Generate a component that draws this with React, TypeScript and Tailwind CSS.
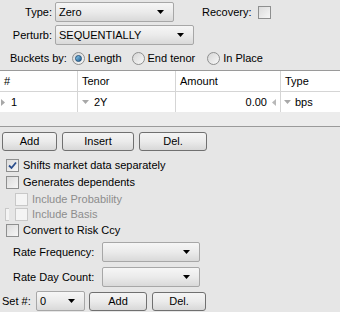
import React from "react";

const font = { fontFamily: '"Liberation Sans", Arial, sans-serif' };

function Arrow() {
  return (
    <svg width="7" height="4" viewBox="0 0 7 4" className="shrink-0">
      <path d="M0 0H7L3.5 4Z" fill="#000" />
    </svg>
  );
}

function Combo({ w, text }: { w: string; text?: string }) {
  return (
    <div
      className={`${w} h-[20px] flex items-center justify-between pl-[3px] pr-[9px] rounded-[2px] border border-[#a7a7a7] bg-gradient-to-b from-[#f6f6f6] via-[#ebebeb] to-[#d9d9d9] text-black`}
    >
      <span className="leading-none">{text}</span>
      <Arrow />
    </div>
  );
}

function Btn({ w, label }: { w: string; label: string }) {
  return (
    <div
      className={`${w} h-[19px] flex items-center justify-center rounded-[3px] border border-[#707070] bg-gradient-to-b from-[#f4f4f4] via-[#ebebeb] to-[#d8d8d8] text-black leading-none`}
    >
      {label}
    </div>
  );
}

function Check({ checked, disabled }: { checked?: boolean; disabled?: boolean }) {
  return (
    <div
      className={`w-[13px] h-[13px] shrink-0 flex items-center justify-center border ${
        disabled ? "border-[#c8c8c8] bg-[#f4f4f4]" : "border-[#8e8f8f] bg-gradient-to-br from-[#dcdcdc] to-[#f6f6f6]"
      }`}
    >
      {checked && (
        <svg width="9" height="9" viewBox="0 0 9 9">
          <path d="M1 4.5L3.5 7L8 1.5" stroke="#2b4e8c" strokeWidth="1.8" fill="none" />
        </svg>
      )}
    </div>
  );
}

function Radio({ checked }: { checked?: boolean }) {
  return (
    <div className="w-[13px] h-[13px] shrink-0 rounded-full border border-[#8e8f8f] bg-gradient-to-br from-[#d6d6d6] to-[#f8f8f8] flex items-center justify-center">
      {checked && (
        <div className="w-[7px] h-[7px] rounded-full bg-gradient-to-br from-[#8fd0f2] to-[#1c5a8e] border border-[#1f4f7a]" />
      )}
    </div>
  );
}

export default function App() {
  return (
    <div
      className="w-[340px] h-[312px] bg-[#e6e6e6] text-[11px] text-black overflow-hidden flex flex-col select-none"
      style={font}
    >
      {/* Row 1 */}
      <div className="flex items-center mt-[2px] h-[20px]">
        <div className="w-[52px] text-right">Type:</div>
        <div className="ml-[3px]">
          <Combo w="w-[119px]" text="Zero" />
        </div>
        <div className="ml-[28px]">Recovery:</div>
        <div className="ml-[6px]">
          <Check />
        </div>
      </div>
      {/* Row 2 */}
      <div className="flex items-center mt-[3px] h-[20px]">
        <div className="w-[52px] text-right">Perturb:</div>
        <div className="ml-[3px]">
          <Combo w="w-[139px]" text="SEQUENTIALLY" />
        </div>
      </div>
      {/* Row 3 */}
      <div className="flex items-center mt-[3px] h-[20px] pl-[10px]">
        <span>Buckets by:</span>
        <div className="ml-[5px]">
          <Radio checked />
        </div>
        <span className="ml-[3px]">Length</span>
        <div className="ml-[10px]">
          <Radio />
        </div>
        <span className="ml-[3px]">End tenor</span>
        <div className="ml-[12px]">
          <Radio />
        </div>
        <span className="ml-[3px]">In Place</span>
      </div>
      {/* Table */}
      <div className="mt-[2px] border-t border-b border-[#9a9a9a] bg-[#ececec] h-[57px] flex flex-col">
        <div className="flex h-[21px] bg-white border-b border-[#d5d5d5]">
          <div className="w-[78px] border-r border-[#d5d5d5] pl-[4px] flex items-center">#</div>
          <div className="w-[98px] border-r border-[#d5d5d5] pl-[4px] flex items-center">Tenor</div>
          <div className="w-[105px] border-r border-[#d5d5d5] pl-[4px] flex items-center">Amount</div>
          <div className="flex-1 pl-[4px] flex items-center">Type</div>
        </div>
        <div className="flex h-[20px] bg-white">
          <div className="w-[78px] border-r border-[#d5d5d5] pl-[1px] flex items-center">
            <svg width="4" height="7" viewBox="0 0 4 7">
              <path d="M0 0L4 3.5L0 7Z" fill="#a8a8a8" />
            </svg>
            <span className="ml-[6px]">1</span>
          </div>
          <div className="w-[98px] border-r border-[#d5d5d5] pl-[4px] flex items-center">
            <svg width="7" height="4" viewBox="0 0 7 4">
              <path d="M0 0H7L3.5 4Z" fill="#a8a8a8" />
            </svg>
            <span className="ml-[5px]">2Y</span>
          </div>
          <div className="w-[105px] border-r border-[#d5d5d5] flex items-center justify-end pr-[4px]">
            <span>0.00</span>
            <svg width="4" height="7" viewBox="0 0 4 7" className="ml-[5px]">
              <path d="M4 0L0 3.5L4 7Z" fill="#b8b8b8" />
            </svg>
          </div>
          <div className="flex-1 pl-[3px] flex items-center">
            <svg width="7" height="4" viewBox="0 0 7 4">
              <path d="M0 0H7L3.5 4Z" fill="#a8a8a8" />
            </svg>
            <span className="ml-[4px]">bps</span>
          </div>
        </div>
      </div>
      {/* Buttons */}
      <div className="flex mt-[5px] pl-[2px] gap-[5px]">
        <Btn w="w-[55px]" label="Add" />
        <Btn w="w-[72px]" label="Insert" />
        <Btn w="w-[68px]" label="Del." />
      </div>
      {/* Checkboxes */}
      <div className="flex items-center h-[18px] mt-[5px] pl-[6px]">
        <Check checked />
        <span className="ml-[4px]">Shifts market data separately</span>
      </div>
      <div className="flex items-center h-[17px] pl-[6px]">
        <Check />
        <span className="ml-[4px]">Generates dependents</span>
      </div>
      <div className="flex items-center h-[16px] pl-[15px]">
        <Check disabled />
        <span className="ml-[4px] text-[#8d8d8d]">Include Probability</span>
      </div>
      <div className="flex items-center h-[15px] pl-[5px]">
        <div className="w-[4px] h-[13px] border border-r-0 border-[#c8c8c8] bg-[#f4f4f4]" />
        <div className="ml-[6px]">
          <Check disabled />
        </div>
        <span className="ml-[4px] text-[#8d8d8d]">Include Basis</span>
      </div>
      <div className="flex items-center h-[16px] pl-[6px]">
        <Check />
        <span className="ml-[4px]">Convert to Risk Ccy</span>
      </div>
      {/* Rate rows */}
      <div className="flex items-center mt-[4px] h-[20px] pl-[13px]">
        <span className="w-[89px]">Rate Frequency:</span>
        <Combo w="w-[98px]" />
      </div>
      <div className="flex items-center mt-[5px] h-[20px] pl-[13px]">
        <span className="w-[89px]">Rate Day Count:</span>
        <Combo w="w-[98px]" />
      </div>
      <div className="flex items-center mt-[4px] h-[20px] pl-[2px]">
        <span className="w-[34px]">Set #:</span>
        <Combo w="w-[49px]" text="0" />
        <div className="ml-[4px]">
          <Btn w="w-[58px]" label="Add" />
        </div>
        <div className="ml-[5px]">
          <Btn w="w-[54px]" label="Del." />
        </div>
      </div>
    </div>
  );
}
